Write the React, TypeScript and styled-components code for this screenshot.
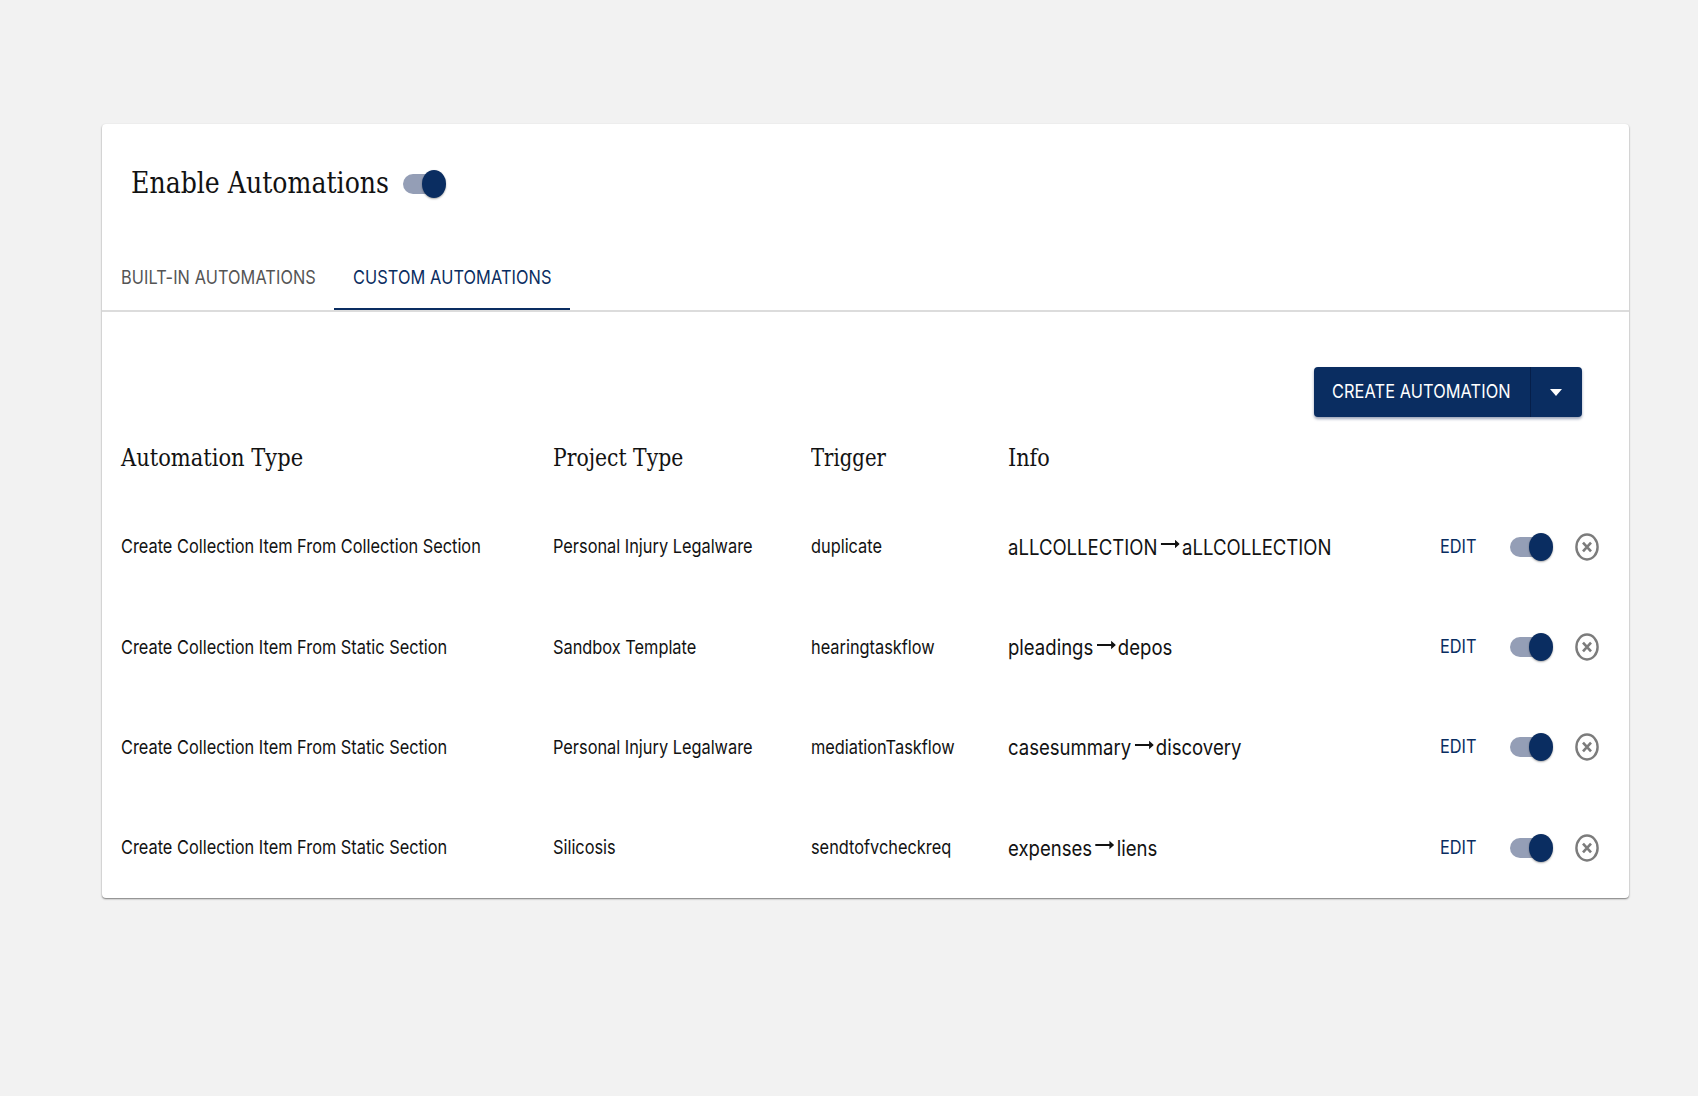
import React from 'react';
import styled, { createGlobalStyle } from 'styled-components';

const NAVY = '#0a2d61';

const GlobalStyle = createGlobalStyle`
  * { box-sizing: border-box; }
  body {
    margin: 0;
    background: #f2f2f2;
    color: #121212;
    font-family: Inter, 'Liberation Sans', sans-serif;
  }
  button { font: inherit; color: inherit; background: none; border: 0; padding: 0; margin: 0; }
`;

const Page = styled.div`
  min-height: 1096px;
  padding: 124px 69px 0 102px;
`;

const Card = styled.main`
  height: 774px;
  background: #fff;
  border-radius: 4px;
  box-shadow: 0 1px 2px rgba(0, 0, 0, 0.42), 0 1px 1px rgba(0, 0, 0, 0.12);
`;

/* Narrow text setting used throughout the panel */
const Narrow = styled.span<{ $scale?: number }>`
  display: inline-flex;
  align-items: center;
  white-space: nowrap;
  transform: scaleX(${(p) => p.$scale ?? 0.86});
  transform-origin: left center;
`;

const TitleBar = styled.header`
  display: grid;
  grid-template-columns: 272px auto;
  align-items: center;
  height: 120px;
  padding-left: 28.5px;
`;

const Title = styled.h1`
  margin: -2px 0 0;
  width: 272px;
  font: 400 30.6px/40px 'Roboto Slab', 'DejaVu Serif', serif;
`;

const Tabs = styled.nav`
  display: flex;
  height: 68px;
  border-bottom: 2px solid #dcdcdc;
`;

const Tab = styled.button<{ $active?: boolean; $width: number }>`
  display: flex;
  align-items: center;
  width: ${(p) => p.$width}px;
  height: 66px;
  padding: 3px 0 0 19px;
  font-size: 19px;
  letter-spacing: 0.1px;
  color: ${(p) => (p.$active ? NAVY : '#555')};
  border-bottom: 2px solid ${(p) => (p.$active ? NAVY : 'transparent')};
`;

const Toolbar = styled.div`
  display: flex;
  justify-content: flex-end;
  padding: 55px 47px 0 0;
`;

const SplitButton = styled.div`
  display: flex;
  width: 268px;
  height: 50px;
  color: #fff;
  background: ${NAVY};
  border-radius: 4px;
  box-shadow: 0 2px 3px rgba(10, 30, 80, 0.4);
`;

const CreateButton = styled.button`
  display: flex;
  align-items: center;
  width: 217px;
  height: 50px;
  padding: 0 0 2px 18px;
  font-size: 19px;
  letter-spacing: 0.1px;
  border-right: 1px solid #061f4a;
`;

const MenuButton = styled.button`
  display: flex;
  flex: 1;
  align-items: center;
  justify-content: center;
  padding-right: 1px;
`;

const Row = styled.div`
  display: grid;
  grid-template-columns: 432.5px 257.5px 197px 432.5px 70px 65px 30px;
  align-items: center;
  height: 100.3px;
  padding: 1px 0 0 18.5px;
`;

const HeadRow = styled(Row)`
  height: 79.25px;
  padding-top: 0;
  font: 400 24.3px/32px 'Roboto Slab', 'DejaVu Serif', serif;
`;

const Cell = styled.div`
  min-width: 0;
  padding-top: 1px;
  font-size: 19px;
  line-height: 26px;
`;

const HeadCell = styled.div`
  min-width: 0;
  padding-top: 2px;
`;

const InfoCell = styled(Cell)`
  padding-top: 0;
  font-size: 21.5px;
`;

const EditButton = styled.button`
  text-align: left;
  font-size: 19px;
  line-height: 26px;
  color: ${NAVY};
`;

const Track = styled.button`
  display: flex;
  align-items: center;
  justify-content: flex-end;
  width: 43px;
  height: 20px;
  border-radius: 10px;
  background: linear-gradient(90deg, #949eb6 0 32px, transparent 32px);
`;

const Thumb = styled.span`
  flex: none;
  width: 24px;
  height: 28px;
  border-radius: 50%;
  background: ${NAVY};
  box-shadow: 0 1px 2px rgba(0, 0, 0, 0.35);
`;

const RemoveButton = styled.button`
  display: flex;
`;

const Arrow = styled.svg`
  margin: -5px 2.5px 0 4px;
`;

function Toggle() {
  return (
    <Track role="switch" aria-checked="true">
      <Thumb />
    </Track>
  );
}

const ArrowIcon = () => (
  <Arrow width="22" height="10" viewBox="0 0 22 10" aria-hidden="true">
    <path d="M0 4h16.500V.8L22 5l-5.500 4.200V6H0z" fill="#121212" />
  </Arrow>
);

const RemoveIcon = () => (
  <svg width="24" height="28" viewBox="0 0 24 28" fill="none" stroke="#7c7c7c" aria-hidden="true">
    <ellipse cx="12" cy="14" rx="10.600" ry="12.500" strokeWidth="2.400" />
    <path d="M8 9.600l8 8.800M16 9.600l-8 8.800" strokeWidth="2.600" />
  </svg>
);

const headings = [
  { label: 'Automation Type', scale: 0.865 },
  { label: 'Project Type', scale: 0.838 },
  { label: 'Trigger', scale: 0.808 },
  { label: 'Info', scale: 0.855 },
];

const rows = [
  { type: 'Create Collection Item From Collection Section', project: 'Personal Injury Legalware', trigger: 'duplicate', from: 'aLLCOLLECTION', to: 'aLLCOLLECTION' },
  { type: 'Create Collection Item From Static Section', project: 'Sandbox Template', trigger: 'hearingtaskflow', from: 'pleadings', to: 'depos' },
  { type: 'Create Collection Item From Static Section', project: 'Personal Injury Legalware', trigger: 'mediationTaskflow', from: 'casesummary', to: 'discovery' },
  { type: 'Create Collection Item From Static Section', project: 'Silicosis', trigger: 'sendtofvcheckreq', from: 'expenses', to: 'liens' },
];

export default function App() {
  return (
    <Page>
      <GlobalStyle />
      <Card>
        <TitleBar>
          <Title>
            <Narrow $scale={0.824}>Enable Automations</Narrow>
          </Title>
          <Toggle />
        </TitleBar>
        <Tabs>
          <Tab $width={232}>
            <Narrow $scale={0.858}>BUILT-IN AUTOMATIONS</Narrow>
          </Tab>
          <Tab $width={236} $active>
            <Narrow $scale={0.86}>CUSTOM AUTOMATIONS</Narrow>
          </Tab>
        </Tabs>
        <Toolbar>
          <SplitButton>
            <CreateButton>
              <Narrow $scale={0.86}>CREATE AUTOMATION</Narrow>
            </CreateButton>
            <MenuButton aria-label="More options">
              <svg width="12" height="7" viewBox="0 0 12 7">
                <path d="M0 0h12L6 7z" fill="#fff" />
              </svg>
            </MenuButton>
          </SplitButton>
        </Toolbar>
        <HeadRow>
          {headings.map((h) => (
            <HeadCell key={h.label}>
              <Narrow $scale={h.scale}>{h.label}</Narrow>
            </HeadCell>
          ))}
        </HeadRow>
        {rows.map((r) => (
          <Row key={r.trigger}>
            <Cell><Narrow>{r.type}</Narrow></Cell>
            <Cell><Narrow>{r.project}</Narrow></Cell>
            <Cell><Narrow>{r.trigger}</Narrow></Cell>
            <InfoCell>
              <Narrow $scale={0.863}>
                {r.from}
                <ArrowIcon />
                {r.to}
              </Narrow>
            </InfoCell>
            <EditButton><Narrow>EDIT</Narrow></EditButton>
            <Toggle />
            <RemoveButton aria-label="Remove"><RemoveIcon /></RemoveButton>
          </Row>
        ))}
      </Card>
    </Page>
  );
}
